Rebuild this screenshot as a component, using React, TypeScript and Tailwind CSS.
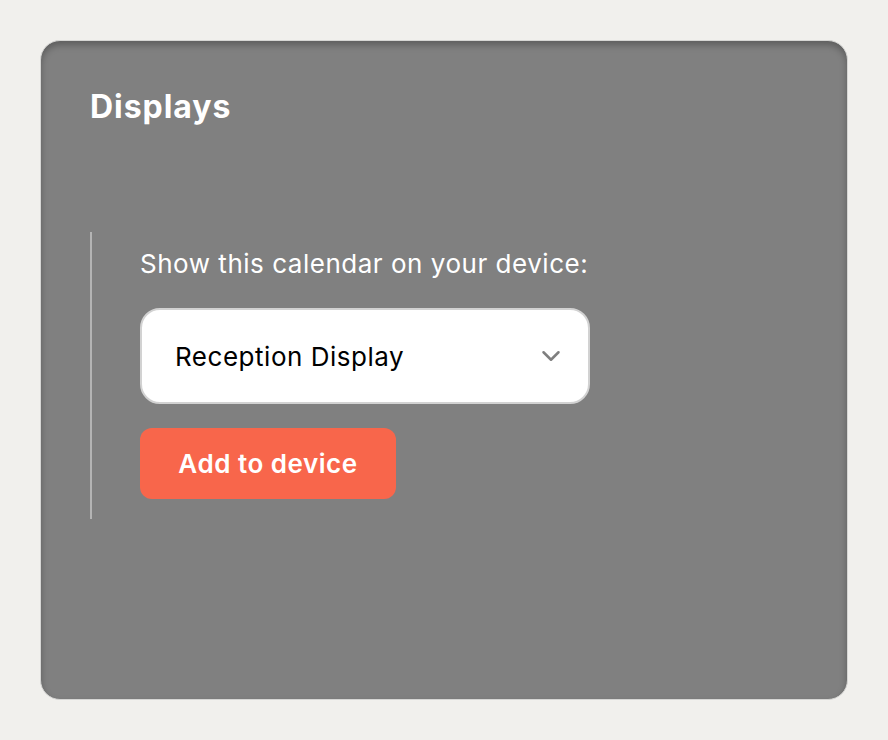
import { ChevronDown } from 'lucide-react';

const devices = ['Reception Display', 'Lobby Display', 'Meeting Room A'];

export default function App() {
  return (
    <div className="h-[740px] w-full bg-[#f1f0ed] p-10 font-['Inter',sans-serif]">
      <div className="flex h-full flex-col rounded-[20px] border border-[#d6d6d4] bg-[#808080] pl-[49px] pt-12 shadow-[inset_0_4px_7px_rgba(0,0,0,0.28)]">
        <h2 className="text-[32px] font-bold leading-9 tracking-[0.03em] text-white">Displays</h2>

        <div className="mt-[107px] flex flex-col items-start border-l-2 border-[#b4b4b4] pb-5 pl-12 pt-[14px]">
          <p className="text-[26px] leading-9 tracking-[0.02em] text-white">Show this calendar on your device:</p>

          <div className="relative mt-[26px] w-[450px]">
            <select
              defaultValue={devices[0]}
              className="h-24 w-full appearance-none rounded-[20px] border-2 border-[#d2d2d2] bg-white pl-[33px] pr-16 text-[26px] tracking-[0.02em] text-black outline-none"
            >
              {devices.map(d => (
                <option key={d}>{d}</option>
              ))}
            </select>
            <ChevronDown
              className="pointer-events-none absolute right-[24px] top-1/2 h-[30px] w-[30px] -translate-y-1/2 text-[#7f7f7f]"
              strokeWidth={2}
            />
          </div>

          <button className="mt-6 h-[71px] w-64 rounded-xl bg-[#f8664b] text-[26px] font-semibold tracking-[0.02em] text-white">
            Add to device
          </button>
        </div>
      </div>
    </div>
  );
}
